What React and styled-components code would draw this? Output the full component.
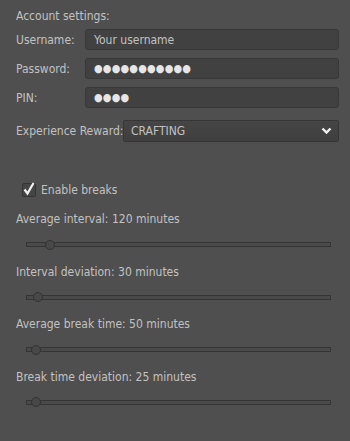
import React from 'react'
import styled, { createGlobalStyle } from 'styled-components'

const GlobalStyle = createGlobalStyle`
  html, body {
    margin: 0;
    padding: 0;
    background: #4f4f4f;
  }
  body {
    font-family: "DejaVu Sans", sans-serif;
    font-stretch: condensed;
    font-size: 12px;
    color: #c2c2c2;
  }
`

const Panel = styled.div`
  width: 350px;
  height: 441px;
  box-sizing: border-box;
  padding: 8px 11px 0 16px;
  background: #4f4f4f;
`

const Heading = styled.div`
  height: 17px;
  line-height: 17px;
`

const Fields = styled.div`
  display: flex;
  flex-direction: column;
  gap: 8px;
  margin-top: 4px;
`

const Row = styled.div`
  display: grid;
  grid-template-columns: ${p => p.$labelWidth}px 1fr;
  align-items: center;
  white-space: nowrap;
`

const Input = styled.div`
  height: 21px;
  box-sizing: border-box;
  background: #414141;
  border: 1px solid #383838;
  border-radius: 3px;
  padding: 0 8px;
  display: flex;
  align-items: center;
  color: ${p => (p.$dots ? '#e6e6e6' : '#c2c2c2')};
  font-size: ${p => (p.$dots ? '11px' : '12px')};
  letter-spacing: ${p => (p.$dots ? '0.2px' : '0')};
`

const SelectBox = styled.div`
  height: 22px;
  box-sizing: border-box;
  background: linear-gradient(#454545, #3f3f3f);
  border: 1px solid #363636;
  border-radius: 2px;
  padding: 0 6px 0 7px;
  display: flex;
  align-items: center;
  justify-content: space-between;
`

const CheckRow = styled.label`
  display: flex;
  align-items: center;
  gap: 5px;
  margin: 41px 0 0 6px;
`

const Box = styled.span`
  width: 14px;
  height: 14px;
  box-sizing: border-box;
  border: 1px solid #333;
  border-radius: 2px;
  background: #454545;
  display: flex;
  align-items: center;
  justify-content: center;
`

const SliderBlock = styled.div`
  margin-top: ${p => p.$top}px;
`

const SliderLabel = styled.div`
  height: 17px;
  line-height: 17px;
`

const Track = styled.div`
  position: relative;
  height: 5px;
  box-sizing: border-box;
  margin: 14px 8px 0 10px;
  border: 1px solid #353535;
  background: #4a4a4a;
`

const Thumb = styled.span`
  position: absolute;
  top: 50%;
  width: 10px;
  height: 10px;
  box-sizing: border-box;
  border-radius: 50%;
  border: 1px solid #333;
  background: #484848;
  transform: translate(-50%, -50%);
`

const sliders = [
  { label: 'Average interval: 120 minutes', pos: 23 },
  { label: 'Interval deviation: 30 minutes', pos: 11 },
  { label: 'Average break time: 50 minutes', pos: 9 },
  { label: 'Break time deviation: 25 minutes', pos: 9 },
]

const App = () => (
  <Panel>
    <GlobalStyle />
    <Heading>Account settings:</Heading>
    <Fields>
      <Row $labelWidth={69}>
        <span>Username:</span>
        <Input>Your username</Input>
      </Row>
      <Row $labelWidth={69}>
        <span>Password:</span>
        <Input $dots>●●●●●●●●●●●</Input>
      </Row>
      <Row $labelWidth={69}>
        <span>PIN:</span>
        <Input $dots>●●●●</Input>
      </Row>
      <Row $labelWidth={107} style={{ marginTop: 4 }}>
        <span>Experience Reward:</span>
        <SelectBox>
          <span>CRAFTING</span>
          <svg width="11" height="8" viewBox="0 0 11 8">
            <path d="M1.5 1.5 L5.5 5.5 L9.5 1.5" fill="none" stroke="#f0f0f0" strokeWidth="2.4" />
          </svg>
        </SelectBox>
      </Row>
    </Fields>
    <CheckRow>
      <Box>
        <svg width="12" height="14" viewBox="0 0 12 14" style={{ marginTop: -3 }}>
          <path d="M1.5 7.5 L4.5 11.5 L10.5 1" fill="none" stroke="#f2f2f2" strokeWidth="2.2" />
        </svg>
      </Box>
      <span>Enable breaks</span>
    </CheckRow>
    {sliders.map((s, i) => (
      <SliderBlock key={s.label} $top={i === 0 ? 14 : 16.5}>
        <SliderLabel>{s.label}</SliderLabel>
        <Track>
          <Thumb style={{ left: s.pos }} />
        </Track>
      </SliderBlock>
    ))}
  </Panel>
)

export default App
